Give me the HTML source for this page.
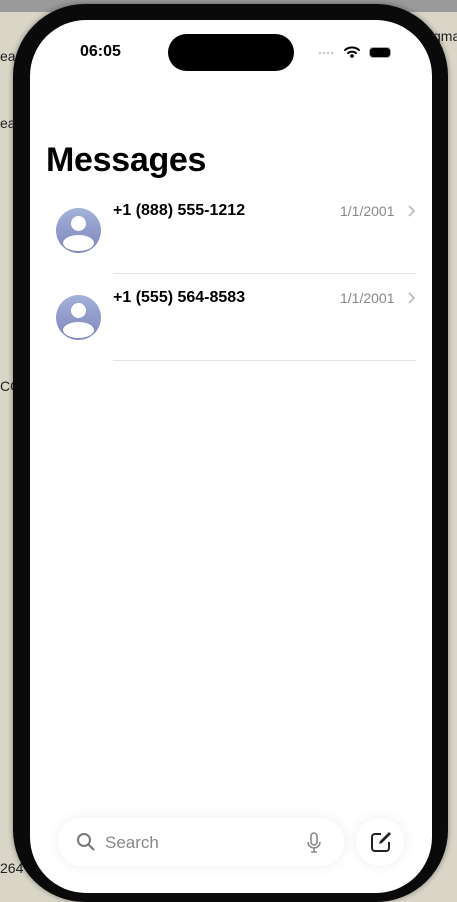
<!DOCTYPE html>
<html><head><style>
*{margin:0;padding:0;box-sizing:border-box}
body{width:457px;height:902px;overflow:hidden;background:#d9d6c8;font-family:"Liberation Sans",sans-serif;position:relative}
.top{position:absolute;left:0;top:0;width:457px;height:12px;background:#9a9a9a}
.bgt{position:absolute;font-size:14px;color:#222}
.frame{position:absolute;left:13px;top:4px;width:435px;height:898px;border-radius:72px;background:#0a0a0a;box-shadow:0 0 6px rgba(0,0,0,.4)}
.screen{position:absolute;left:30px;top:20px;width:402px;height:873px;border-radius:56px;background:#fff;overflow:hidden}
.island{position:absolute;left:138px;top:14px;width:126px;height:37px;border-radius:19px;background:#000}
.time{position:absolute;left:50px;top:23px;font-size:16px;font-weight:bold}
h1{position:absolute;left:16px;top:121px;font-size:34px;font-weight:bold;letter-spacing:-0.3px}
.row{position:absolute;left:0;width:402px;height:87px}
.av{position:absolute;left:26px;top:2px;width:45px;height:45px;border-radius:50%;background:linear-gradient(#a4b2d8,#7d85bd);overflow:hidden}
.av:before{content:"";position:absolute;left:15px;top:8px;width:15px;height:15px;border-radius:50%;background:#fff}
.av:after{content:"";position:absolute;left:7px;top:27px;width:31px;height:16px;border-radius:50%;background:#fff}
.name{position:absolute;left:83px;top:-4px;font-size:16px;font-weight:bold}
.date{position:absolute;left:310px;top:-3px;font-size:14px;color:#888}
.chev{position:absolute;left:377px;top:-3px}
.div{position:absolute;left:83px;top:67px;width:303px;height:1px;background:#e4e4e4}
.search{position:absolute;left:28px;top:798px;width:286px;height:48px;border-radius:24px;background:#fff;box-shadow:0 0 14px rgba(0,0,0,.07)}
.comp{position:absolute;left:326px;top:798px;width:48px;height:48px;border-radius:50%;background:#fff;box-shadow:0 0 14px rgba(0,0,0,.07)}
</style></head><body>
<div class="top"></div>
<div class="bgt" style="left:0;top:48px">ear</div>
<div class="bgt" style="left:0;top:115px">ea</div>
<div class="bgt" style="left:0;top:378px">CO</div>
<div class="bgt" style="left:0;top:860px">264</div>
<div class="bgt" style="left:433px;top:28px">gma</div>
<div class="frame"></div>
<div class="screen">
<div class="island"></div>
<div class="time">06:05</div>
<svg style="position:absolute;left:288px;top:24px" width="74" height="16" viewBox="0 0 74 16">
<g fill="#ccc"><circle cx="2" cy="9" r="1.3"/><circle cx="6" cy="9" r="1.3"/><circle cx="10" cy="9" r="1.3"/><circle cx="14" cy="9" r="1.3"/></g>
<path d="M27 6a11 11 0 0 1 14 0M30 9a6.5 6.5 0 0 1 8 0" stroke="#000" stroke-width="2" fill="none" stroke-linecap="round"/><circle cx="34" cy="12" r="1.8"/>
<rect x="51.5" y="3.5" width="21" height="10" rx="3.5" fill="#000" stroke="#aaa" stroke-width="1"/></svg>
<h1>Messages</h1>
<div class="row" style="top:186px"><div class="av"></div><div class="name">+1 (888) 555-1212</div><div class="date">1/1/2001</div>
<svg class="chev" width="10" height="16" viewBox="0 0 10 16"><path d="M2 3l5 5-5 5" stroke="#bbb" stroke-width="1.8" fill="none"/></svg><div class="div"></div></div>
<div class="row" style="top:273px"><div class="av"></div><div class="name">+1 (555) 564-8583</div><div class="date">1/1/2001</div>
<svg class="chev" width="10" height="16" viewBox="0 0 10 16"><path d="M2 3l5 5-5 5" stroke="#bbb" stroke-width="1.8" fill="none"/></svg><div class="div"></div></div>
<div class="search">
<svg style="position:absolute;left:18px;top:14px" width="20" height="20" viewBox="0 0 20 20"><circle cx="8" cy="8" r="6" stroke="#777" stroke-width="2" fill="none"/><path d="M12.5 12.5l5 5" stroke="#777" stroke-width="2" stroke-linecap="round"/></svg>
<div style="position:absolute;left:47px;top:15px;font-size:17px;color:#888">Search</div>
<svg style="position:absolute;left:248px;top:14px" width="16" height="22" viewBox="0 0 16 22"><rect x="5" y="1" width="6" height="12" rx="3" stroke="#888" stroke-width="1.6" fill="none"/><path d="M2 10a6 6 0 0 0 12 0M8 16v4M5 20h6" stroke="#888" stroke-width="1.6" fill="none"/></svg>
</div>
<div class="comp"><svg style="position:absolute;left:13px;top:12px" width="24" height="24" viewBox="0 0 24 24"><path d="M12 4H6a3 3 0 0 0-3 3v11a3 3 0 0 0 3 3h11a3 3 0 0 0 3-3v-6" stroke="#222" stroke-width="2" fill="none"/><path d="M10 14l1-3 9-9 2 2-9 9z" fill="#222"/></svg></div>
</div>
</body></html>
